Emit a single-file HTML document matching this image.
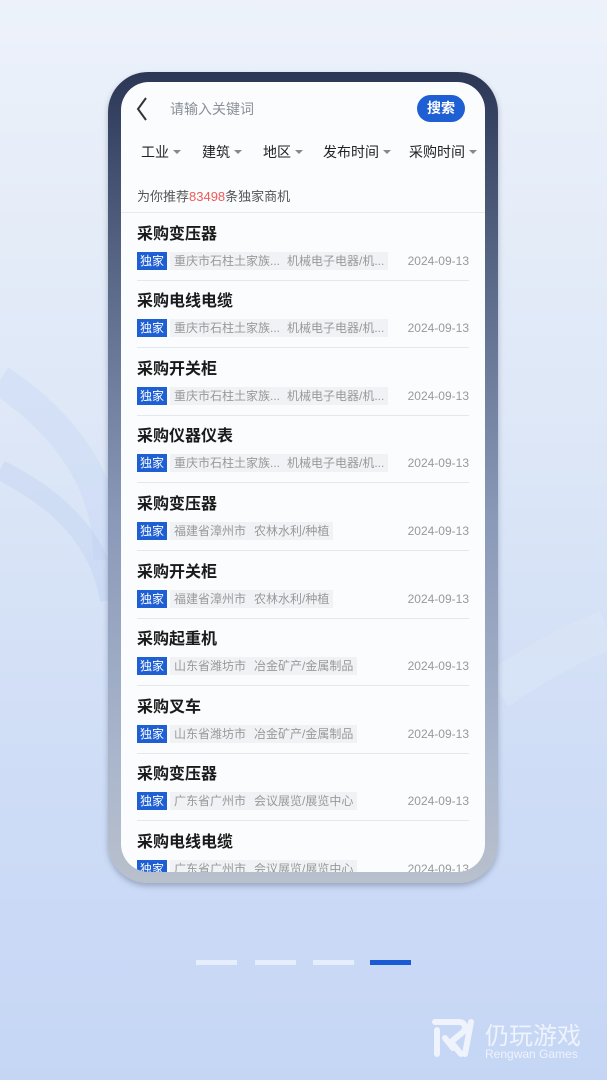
<!DOCTYPE html>
<html><head><meta charset="utf-8"><style>
*{margin:0;padding:0;box-sizing:border-box}
body{width:607px;height:1080px;overflow:hidden;position:relative;font-family:"Liberation Sans","Noto Sans CJK SC",sans-serif;background:linear-gradient(180deg,#edf2fa 0%,#dde7f7 40%,#cfddf6 70%,#c5d6f5 100%)}
.wave{position:absolute;left:0;top:0}
.frame{position:absolute;left:108px;top:72px;width:390px;height:811px;border-radius:40px;background:linear-gradient(180deg,#2c3756 0%,#5a6888 25%,#8a99b8 55%,#aab6cc 85%,#b8c0cc 100%);box-shadow:0 3px 6px rgba(60,70,100,.35)}
.screen{position:absolute;left:121px;top:82px;width:364px;height:790px;border-radius:28px;background:#fbfcfd;overflow:hidden}
.back{position:absolute;left:14px;top:14px}
.ph{position:absolute;left:49px;top:17px;font-size:14px;color:#8a8f99}
.btn{position:absolute;left:296px;top:13px;width:48px;height:27px;border-radius:14px;background:#1f5fd4;color:#fff;font-size:14px;font-weight:bold;text-align:center;line-height:27px}
.filters{position:absolute;top:60px;left:0;width:364px;font-size:14px;color:#222}
.filters span{position:absolute;top:0}
.filters i{display:inline-block;width:0;height:0;border-left:4px solid transparent;border-right:4px solid transparent;border-top:4px solid #888;margin-left:4px;vertical-align:3px}
.rec{position:absolute;left:16px;top:104px;font-size:13px;color:#555}
.rec b{color:#f05a5a;font-weight:normal}
.hl{position:absolute;left:0;top:130px;width:364px;height:1px;background:#e6e9ef}
.item{position:absolute;left:16px;width:332px;height:68px}
.item .t{position:absolute;left:0;top:2px;font-size:16px;font-weight:bold;color:#1a1a1a;line-height:20px}
.item .tg{position:absolute;left:0;top:29px;height:18px;padding:0 3px;background:#1f5fd4;color:#fff;font-size:12px;line-height:18px}
.item .g{position:absolute;top:29px;height:18px;padding:0 4px;background:#f0f2f5;color:#999;font-size:12px;line-height:18px;white-space:nowrap}
.item .d{position:absolute;right:0;top:29px;font-size:12px;color:#999;line-height:18px}
.item .ln{position:absolute;left:0;top:57px;width:332px;height:1px;background:#e4e7ec}
.dot{position:absolute;top:960px;height:5px;width:41px;background:#e6eefb}
.logo{position:absolute;left:431px;top:1016px}
</style></head><body>
<svg class="wave" width="607" height="1080">
<path d="M0 380 C60 420 110 480 108 560" stroke="#c3d5f3" stroke-width="30" fill="none" opacity=".35"/>
<path d="M0 470 C60 500 100 540 110 600" stroke="#b5cbf0" stroke-width="20" fill="none" opacity=".3"/>
<path d="M497 690 C540 660 580 640 607 630" stroke="#dfe8f8" stroke-width="40" fill="none" opacity=".4"/>
</svg>
<div class="frame"></div>
<div class="screen">
<svg class="back" width="14" height="26" viewBox="0 0 14 26"><path d="M11 2 L3 13 L11 24" stroke="#333" stroke-width="2" fill="none"/></svg>
<div class="ph">请输入关键词</div>
<div class="btn">搜索</div>
<div class="filters">
<span style="left:20px">工业<i></i></span>
<span style="left:81px">建筑<i></i></span>
<span style="left:142px">地区<i></i></span>
<span style="left:202px">发布时间<i></i></span>
<span style="left:288px">采购时间<i></i></span>
</div>
<div class="rec">为你推荐<b>83498</b>条独家商机</div>
<div class="hl"></div>
<div class="item" style="top:141px"><div class="t">采购变压器</div><div class="tg">独家</div><div class="g" style="left:33px">重庆市石柱土家族...</div><div class="g" style="left:146px">机械电子电器/机...</div><div class="d">2024-09-13</div><div class="ln"></div></div>
<div class="item" style="top:208px"><div class="t">采购电线电缆</div><div class="tg">独家</div><div class="g" style="left:33px">重庆市石柱土家族...</div><div class="g" style="left:146px">机械电子电器/机...</div><div class="d">2024-09-13</div><div class="ln"></div></div>
<div class="item" style="top:276px"><div class="t">采购开关柜</div><div class="tg">独家</div><div class="g" style="left:33px">重庆市石柱土家族...</div><div class="g" style="left:146px">机械电子电器/机...</div><div class="d">2024-09-13</div><div class="ln"></div></div>
<div class="item" style="top:343px"><div class="t">采购仪器仪表</div><div class="tg">独家</div><div class="g" style="left:33px">重庆市石柱土家族...</div><div class="g" style="left:146px">机械电子电器/机...</div><div class="d">2024-09-13</div><div class="ln"></div></div>
<div class="item" style="top:411px"><div class="t">采购变压器</div><div class="tg">独家</div><div class="g" style="left:33px">福建省漳州市</div><div class="g" style="left:113px">农林水利/种植</div><div class="d">2024-09-13</div><div class="ln"></div></div>
<div class="item" style="top:479px"><div class="t">采购开关柜</div><div class="tg">独家</div><div class="g" style="left:33px">福建省漳州市</div><div class="g" style="left:113px">农林水利/种植</div><div class="d">2024-09-13</div><div class="ln"></div></div>
<div class="item" style="top:546px"><div class="t">采购起重机</div><div class="tg">独家</div><div class="g" style="left:33px">山东省潍坊市</div><div class="g" style="left:113px">冶金矿产/金属制品</div><div class="d">2024-09-13</div><div class="ln"></div></div>
<div class="item" style="top:614px"><div class="t">采购叉车</div><div class="tg">独家</div><div class="g" style="left:33px">山东省潍坊市</div><div class="g" style="left:113px">冶金矿产/金属制品</div><div class="d">2024-09-13</div><div class="ln"></div></div>
<div class="item" style="top:681px"><div class="t">采购变压器</div><div class="tg">独家</div><div class="g" style="left:33px">广东省广州市</div><div class="g" style="left:113px">会议展览/展览中心</div><div class="d">2024-09-13</div><div class="ln"></div></div>
<div class="item" style="top:749px"><div class="t">采购电线电缆</div><div class="tg">独家</div><div class="g" style="left:33px">广东省广州市</div><div class="g" style="left:113px">会议展览/展览中心</div><div class="d">2024-09-13</div></div>
</div>
<div class="dot" style="left:196px"></div>
<div class="dot" style="left:255px"></div>
<div class="dot" style="left:313px"></div>
<div class="dot" style="left:370px;background:#1a5ad4"></div>
<div class="logo">
<svg width="50" height="40" viewBox="0 0 50 40" style="position:absolute;left:0;top:2px"><path d="M4 4 H28 C34 4 36 10 32 14 L20 24 L30 36 M6 12 V36 M14 20 L22 30 M40 4 L34 36" stroke="#eef3fc" stroke-width="6" fill="none" stroke-linecap="round"/></svg>
<div style="position:absolute;left:54px;top:0;font-size:24px;color:#eef3fc;white-space:nowrap">仍玩游戏</div>
<div style="position:absolute;left:54px;top:31px;font-size:12px;color:#eef3fc;white-space:nowrap">Rengwan Games</div>
</div>
</body></html>
